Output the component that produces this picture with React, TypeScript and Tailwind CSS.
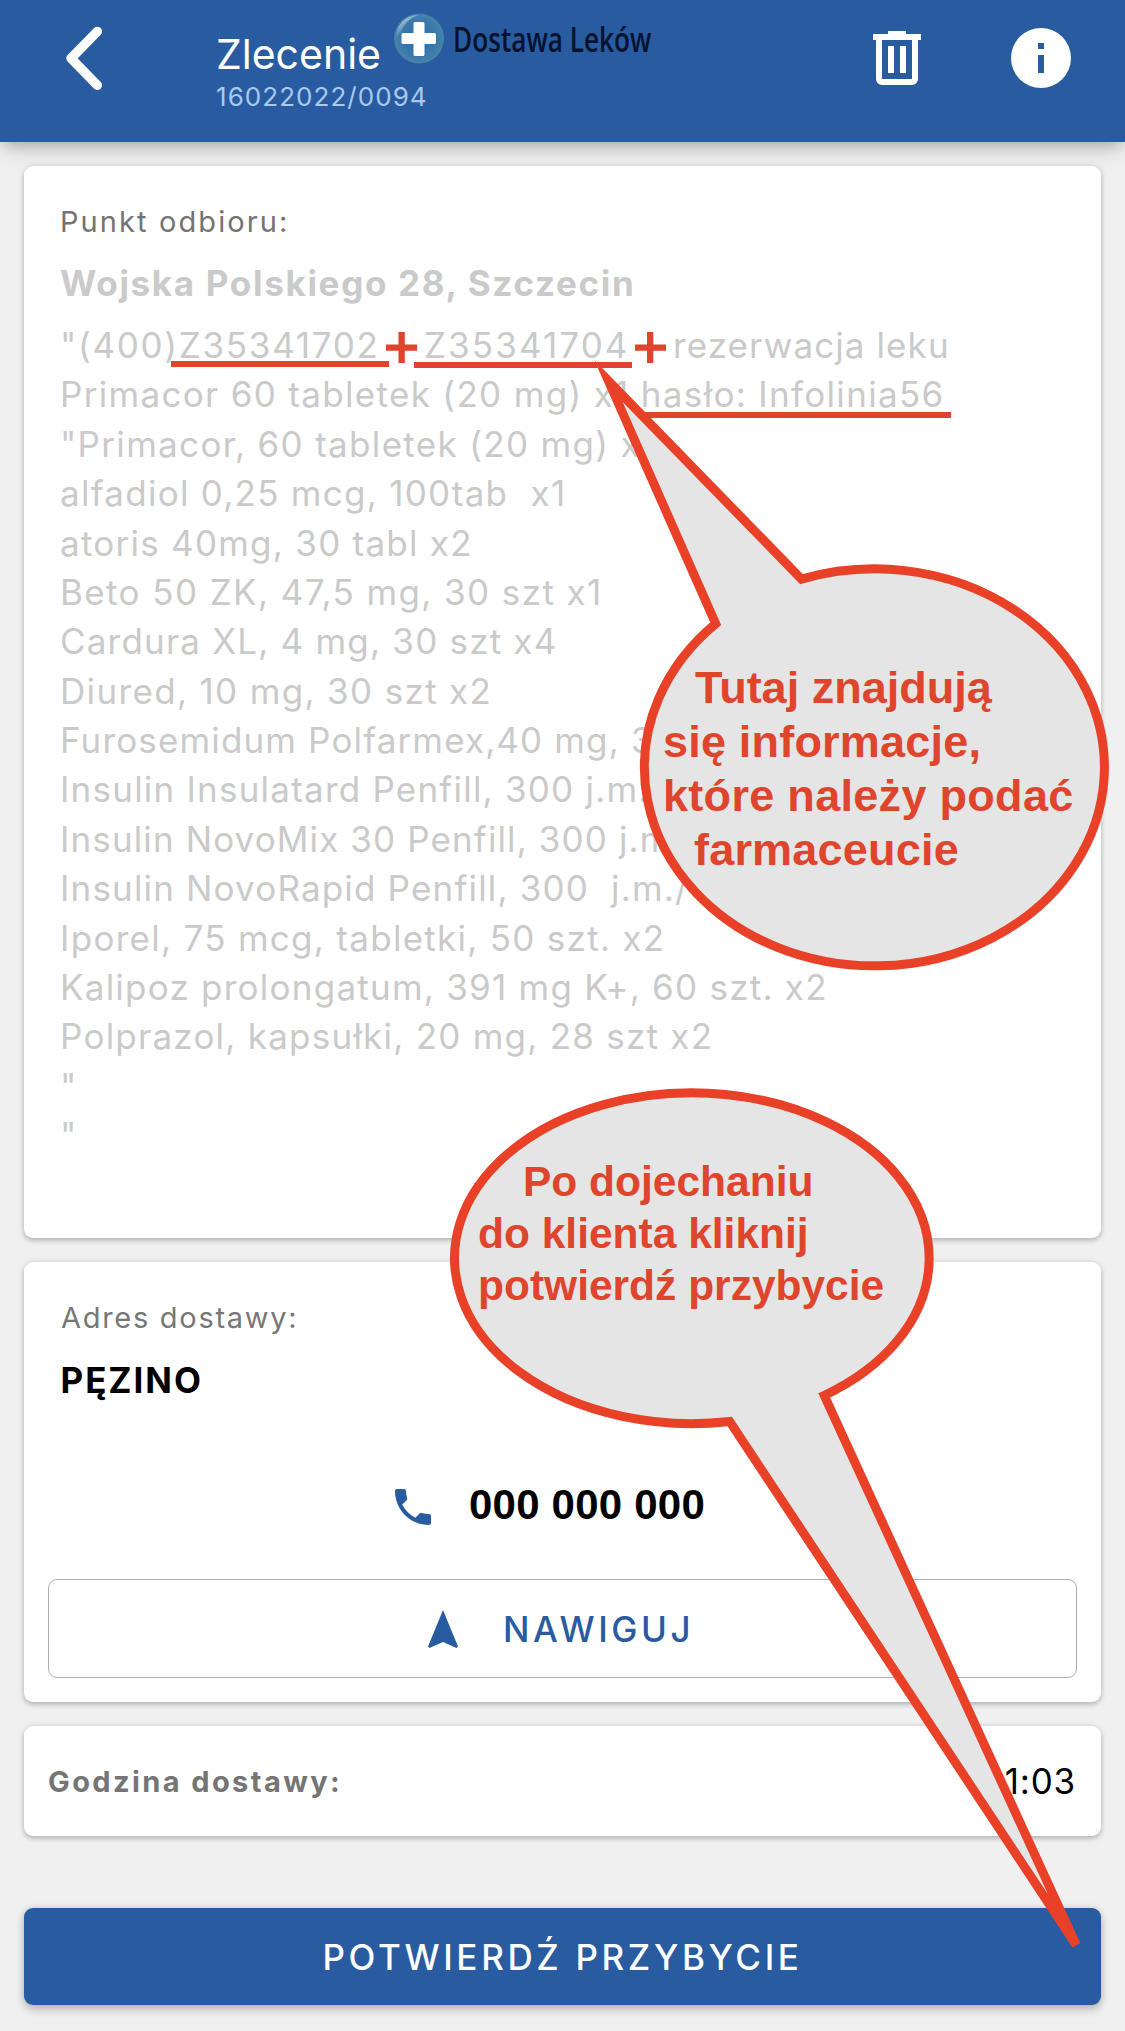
import { MdNavigation, MdPhone } from 'react-icons/md'

const medicines = [
    { text: 'Primacor 60 tabletek (20 mg) x1 hasło: Infolinia56', tracking: 'tracking-[1.32px]' },
    { text: '"Primacor, 60 tabletek (20 mg) x1', tracking: 'tracking-[1.32px]' },
    { text: 'alfadiol 0,25 mcg, 100tab  x1', tracking: 'tracking-[1.26px]' },
    { text: 'atoris 40mg, 30 tabl x2', tracking: 'tracking-[1.25px]' },
    { text: 'Beto 50 ZK, 47,5 mg, 30 szt x1', tracking: 'tracking-[1.4px]' },
    { text: 'Cardura XL, 4 mg, 30 szt x4', tracking: 'tracking-[1.2px]' },
    { text: 'Diured, 10 mg, 30 szt x2', tracking: 'tracking-[1.34px]' },
    { text: 'Furosemidum Polfarmex,40 mg, 3', tracking: 'tracking-[1.14px]' },
    { text: 'Insulin Insulatard Penfill, 300 j.m.', tracking: 'tracking-[1.22px]' },
    { text: 'Insulin NovoMix 30 Penfill, 300 j.m', tracking: 'tracking-[1.12px]' },
    { text: 'Insulin NovoRapid Penfill, 300  j.m./', tracking: 'tracking-[1.17px]' },
    { text: 'Iporel, 75 mcg, tabletki, 50 szt. x2', tracking: 'tracking-[1.28px]' },
    { text: 'Kalipoz prolongatum, 391 mg K+, 60 szt. x2', tracking: 'tracking-[1.24px]' },
    { text: 'Polprazol, kapsułki, 20 mg, 28 szt x2', tracking: 'tracking-[1.24px]' },
    { text: '"', tracking: 'tracking-[1.32px]' },
    { text: '"', tracking: 'tracking-[1.32px]' },
]

const card = 'bg-white rounded-[9px] shadow-[0_3px_5px_rgba(0,0,0,0.18),0_0_6px_rgba(0,0,0,0.12)]'

function BackIcon() {
    return (
        <svg className="w-12 h-[70px]" viewBox="0 0 48 70" fill="none" stroke="#fff" strokeWidth="9.5" strokeLinecap="round" strokeLinejoin="round">
            <path d="M37.3 8.5 11 35.3l26.3 27" />
        </svg>
    )
}

function TrashIcon() {
    return (
        <svg className="w-12 h-[54px]" viewBox="0 0 48 54" fill="#fff">
            <path d="M15 0h18v3h15v6H0V3h15z" />
            <path fillRule="evenodd" d="M3 9h42v39a6 6 0 0 1-6 6H9a6 6 0 0 1-6-6zM9 9v39h30V9z" />
            <path d="M15 15h6v27h-6zM27 15h6v27h-6z" />
        </svg>
    )
}

function InfoIcon() {
    return (
        <svg className="w-[60px] h-[60px]" viewBox="0 0 60 60">
            <circle cx="30" cy="30" r="30" fill="#fff" />
            <path d="M27 15h6v6h-6zM27 27h6v18h-6z" fill="#285ba0" />
        </svg>
    )
}

function Logo() {
    return (
        <div className="flex items-center gap-[9px] pt-[13px]">
            <svg className="w-[50px] h-[51px]" viewBox="0 0 50 51">
                <defs>
                    <radialGradient id="ball" cx="0.5" cy="0.5" r="0.52">
                        <stop offset="0" stopColor="#2a6cb0" />
                        <stop offset="0.7" stopColor="#3a79ab" />
                        <stop offset="1" stopColor="#4a85a8" />
                    </radialGradient>
                    <linearGradient id="shine" x1="0" y1="0" x2="0.7" y2="0.8">
                        <stop offset="0" stopColor="#fff" stopOpacity="1" />
                        <stop offset="0.75" stopColor="#fff" stopOpacity="0" />
                    </linearGradient>
                </defs>
                <circle cx="25" cy="25.5" r="25" fill="url(#ball)" />
                <path d="M2 24C3 10 13 2 25 2c-9 3-16 9-19 20z" fill="url(#shine)" />
                <path d="M21 9h8a1.500 1.500 0 0 1 1.500 1.500V20h10a1.500 1.500 0 0 1 1.500 1.500v8a1.500 1.500 0 0 1-1.500 1.500h-10v10.500a1.500 1.500 0 0 1-1.500 1.500h-8a1.500 1.500 0 0 1-1.500-1.500V31H9a1.500 1.500 0 0 1-1.500-1.500v-8A1.500 1.500 0 0 1 9 20h10.500v-9.500A1.500 1.500 0 0 1 21 9z" fill="#fff" />
            </svg>
            <span className="origin-left scale-x-[0.77] whitespace-nowrap font-['Open_Sans',sans-serif] font-semibold text-[34px] leading-[50px] text-[#06132e]">
                Dostawa Leków
            </span>
        </div>
    )
}

function Header() {
    return (
        <header className="relative flex items-start h-[142px] bg-[#285ba0] shadow-[0_6px_12px_-3px_rgba(0,0,0,0.16),0_12px_20px_-4px_rgba(0,0,0,0.16)]">
            <button className="ml-[60px] mt-[23px]">
                <BackIcon />
            </button>
            <div className="ml-[108px] mt-[29px] w-[178px]">
                <h1 className="text-[41px] leading-[50px] text-white">Zlecenie</h1>
                <p className="text-[26px] leading-[36px] tracking-[1.05px] text-[#a9c9f0]">16022022/0094</p>
            </div>
            <Logo />
            <div className="ml-auto mr-[54px] mt-[28px] flex items-start gap-[90px]">
                <button className="mt-[3px]">
                    <TrashIcon />
                </button>
                <button>
                    <InfoIcon />
                </button>
            </div>
        </header>
    )
}

// Red marks and speech bubbles laid over the order screen
function Annotations() {
    return (
        <div className="absolute inset-0 font-['Liberation_Sans',Arial,sans-serif] font-bold text-[#df452d]">
            <svg className="absolute inset-0" width="1125" height="2031" viewBox="0 0 1125 2031">
                <g fill="#df452d">
                    <path d="M171 361h218v6H171zM414 362h218v6H414zM640 412h311v6H640z" />
                    <path d="M386 344.500h31v6.300h-31zM398.500 332h6.300v31h-6.300z" />
                    <path d="M635 344.500h31v6.300h-31zM647 332h6.300v31H647z" />
                </g>
                <g fill="#e5e5e5" stroke="#e84128" strokeWidth="9">
                    <path strokeMiterlimit="20" d="M608.500 381 801.500 579.100A230 198.500 0 1 1 715.700 623.700z" />
                    <path d="M1076.200 1945 729.700 1421.500A237.300 165.400 0 1 1 824.200 1395.500z" />
                </g>
            </svg>
            <div className="absolute left-[663px] top-[661px] text-[45px] leading-[54px] whitespace-nowrap">
                <p className="pl-8">Tutaj znajdują</p>
                <p className="tracking-[0.2px]">się informacje,</p>
                <p className="tracking-[0.3px]">które należy podać</p>
                <p className="pl-[31px] tracking-[0.2px]">farmaceucie</p>
            </div>
            <div className="absolute left-[478px] top-[1156px] text-[42.5px] leading-[52.2px] whitespace-nowrap">
                <p className="pl-[45px]">Po dojechaniu</p>
                <p>do klienta kliknij</p>
                <p>potwierdź przybycie</p>
            </div>
        </div>
    )
}

export default function App() {
    return (
        <div className="relative w-[1125px] h-[2031px] overflow-hidden bg-[#f0f0f0] font-['Inter',sans-serif]">
            <Header />
            <main className="flex flex-col gap-6 px-6 pt-6">
                <section className={`${card} h-[1072px] pt-9 pl-9`}>
                    <p className="text-[29px] leading-[40px] tracking-[2.1px] text-[#737373]">Punkt odbioru:</p>
                    <h2 className="mt-4 text-[35px] leading-[50px] font-bold tracking-[1.68px] text-[#cacaca]">
                        Wojska Polskiego 28, Szczecin
                    </h2>
                    <div className="mt-[13px] text-[35px] leading-[49.38px] text-[#cacaca] whitespace-pre">
                        <div className="flex">
                            <span className="w-[364px] tracking-[1.7px]">"(400)Z35341702</span>
                            <span className="w-[249px] tracking-[2.1px]">Z35341704</span>
                            <span className="tracking-[1.1px]">rezerwacja leku</span>
                        </div>
                        {medicines.map((line, i) => (
                            <p key={i} className={line.tracking}>{line.text}</p>
                        ))}
                    </div>
                </section>

                <section className={`${card} h-[440px] pt-9 px-6`}>
                    <p className="pl-[13px] text-[29px] leading-[40px] tracking-[1.71px] text-[#777]">Adres dostawy:</p>
                    <h2 className="mt-[17px] pl-[12.5px] text-[35px] leading-[50px] font-bold tracking-[1.96px] text-black">PĘZINO</h2>
                    <div className="mt-[77px] pl-[341px] flex items-center gap-8 h-[50px]">
                        <MdPhone className="w-12 h-12 text-[#285ba0]" />
                        <span className="mb-1 font-['Liberation_Sans',Arial,sans-serif] font-bold text-[42px] leading-[46px] tracking-[0.22px] text-black">
                            000 000 000
                        </span>
                    </div>
                    <button className="mt-[47px] w-full h-[99px] pl-[370px] flex items-center gap-9 rounded-[9px] border border-[#b0b0b0] text-[#285ba0]">
                        <MdNavigation className="mt-[3px] w-12 h-12" />
                        <span className="text-[35px] leading-[50px] font-medium tracking-[3.63px]">NAWIGUJ</span>
                    </button>
                </section>

                <section className={`${card} h-[110px] pl-6 pr-[25px] pt-px flex items-center justify-between`}>
                    <span className="text-[29px] font-bold tracking-[2.4px] text-[#757575]">Godzina dostawy:</span>
                    <span className="text-[35px] tracking-[0.8px] text-black">1:03</span>
                </section>

                <button className="mt-12 h-[97px] pt-0.5 rounded-[9px] bg-[#285ba0] text-[35px] font-medium tracking-[3.65px] text-white shadow-[0_5px_10px_rgba(0,0,0,0.2),0_0_6px_rgba(0,0,0,0.14)]">
                    POTWIERDŹ PRZYBYCIE
                </button>
            </main>
            <Annotations />
        </div>
    )
}
